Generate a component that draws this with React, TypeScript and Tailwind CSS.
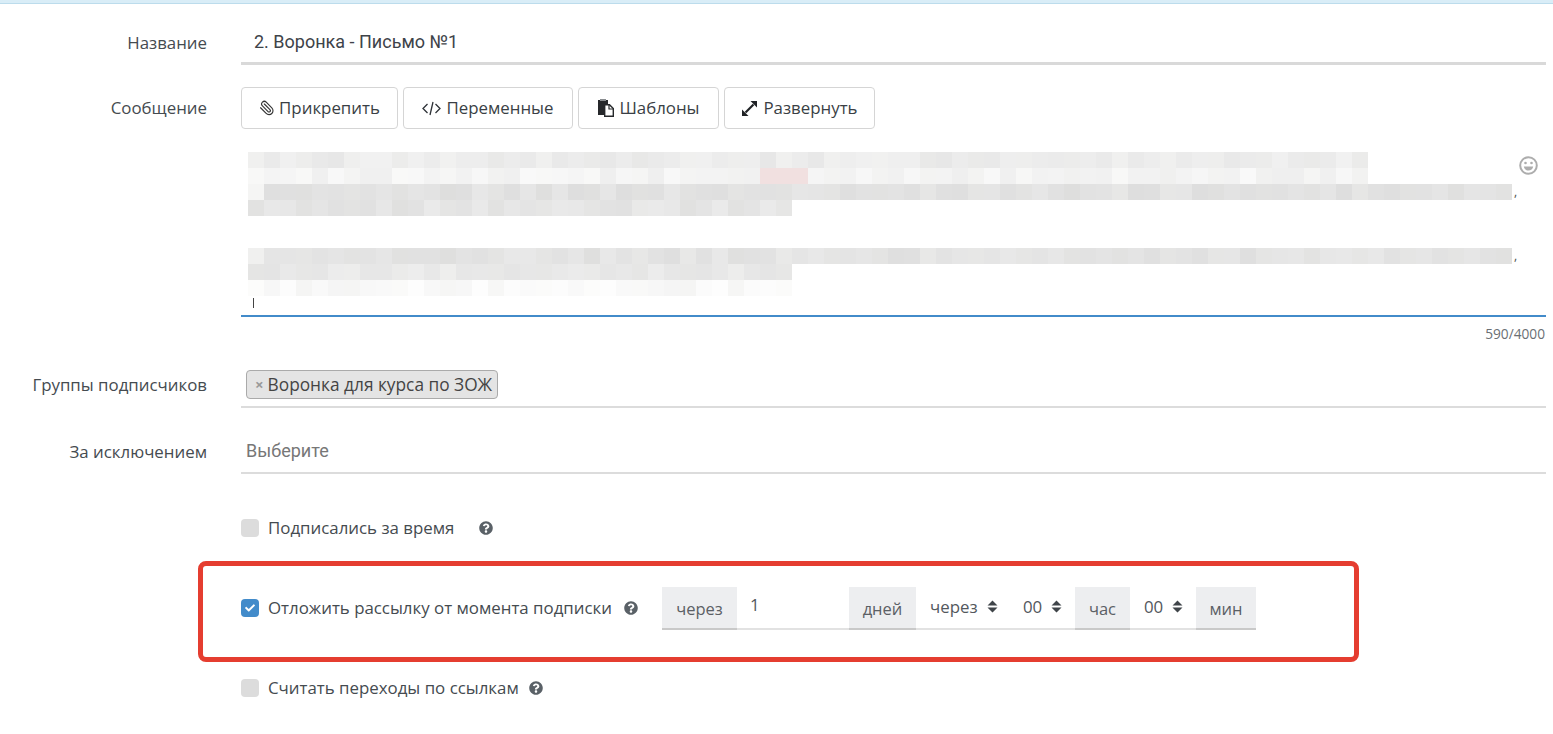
import React from "react";
import { Paperclip } from "lucide-react";
import { FaQuestionCircle, FaCheck } from "react-icons/fa";

const OS = "font-['Open_Sans','Noto_Sans',sans-serif]";
const RB = "font-['Roboto','Liberation_Sans',sans-serif]";

function noise(seed: number, i: number) {
  const x = Math.sin(seed * 97.13 + i * 12.9898) * 43758.5453;
  return x - Math.floor(x);
}

function BlurRow({ seed, cells, base, first, pinkAt }: { seed: number; cells: number; base: number; first?: number; pinkAt?: number[] }) {
  return (
    <div className="flex h-4">
      {Array.from({ length: cells }).map((_, i) => {
        const v = i === 0 && first ? first : Math.min(253, Math.round(base + (noise(seed, i) - 0.5) * 10));
        const pink = pinkAt && pinkAt.includes(i);
        return (
          <div
            key={i}
            className="w-4 h-4 shrink-0"
            style={{ backgroundColor: pink ? "#f1e0e0" : `rgb(${v},${v},${v - (i % 3 === 0 ? 1 : 0)})` }}
          />
        );
      })}
    </div>
  );
}

function Label({ children, className = "" }: { children: React.ReactNode; className?: string }) {
  return <div className={`w-[207px] shrink-0 text-right text-[16.85px] text-[#454b50] ${OS} ${className}`}>{children}</div>;
}

function Btn({ icon, text, w }: { icon: React.ReactNode; text: string; w: string }) {
  return (
    <div className={`${w} h-[42px] flex items-center justify-center gap-[4px] border border-[#d5d5d5] rounded-[4px] bg-white text-[16.85px] text-[#3a3f45] ${OS}`}>
      {icon}
      <span>{text}</span>
    </div>
  );
}

function Check({ on }: { on?: boolean }) {
  return (
    <div className={`w-[18px] h-[18px] rounded-[4px] shrink-0 flex items-center justify-center ${on ? "bg-[#428bca]" : "bg-[#dcdcdc]"}`}>
      {on && <FaCheck className="text-white text-[10px]" />}
    </div>
  );
}

function Addon({ children, w }: { children: React.ReactNode; w: string }) {
  return (
    <div className={`${w} h-[43px] bg-[#edeef0] border-b-2 border-[#c9c9c9] flex items-center justify-center pt-[3px] text-[16.5px] text-[#5b6065] ${OS}`}>
      {children}
    </div>
  );
}

function SortIcon() {
  return (
    <svg width="11" height="13" viewBox="0 0 11 13" className="shrink-0">
      <path d="M5.5 0.5 L10.5 5.5 H0.5 Z M0.5 7.5 H10.5 L5.5 12.5 Z" fill="#3f4449" />
    </svg>
  );
}

function Sel({ children, w, pl }: { children: React.ReactNode; w: string; pl: string }) {
  return (
    <div className={`${w} ${pl} h-[43px] border-b-2 border-[#e2e2e2] flex items-center gap-[9px] pb-[2px] text-[16.85px] text-[#53585d] ${OS}`}>
      <span>{children}</span>
      <SortIcon />
    </div>
  );
}

function Help({ className = "" }: { className?: string }) {
  return <FaQuestionCircle className={`text-[#5a6167] text-[14px] shrink-0 ${className}`} />;
}

function CodeIcon() {
  return (
    <svg width="19" height="15" viewBox="0 0 19 15" fill="none" stroke="#2f3338" strokeWidth="1.3" className="shrink-0 mr-[1px]">
      <path d="M5.5 3 L1 7.5 L5.5 12" />
      <path d="M13.5 3 L18 7.5 L13.5 12" />
      <path d="M11 1 L8 14" />
    </svg>
  );
}

function TemplatesIcon() {
  return (
    <svg width="18" height="18" viewBox="0 0 18 18" className="shrink-0">
      <path d="M1 1 H11 V5 H7 V16 H1 Z" fill="#26282b" />
      <rect x="3" y="0" width="6" height="2" fill="#8a8d90" />
      <path d="M7.7 5.7 H12.5 L16.3 9.5 V17.3 H7.7 Z" fill="#fff" stroke="#26282b" strokeWidth="1.4" />
      <path d="M12 6 V10 H16" fill="none" stroke="#26282b" strokeWidth="1.2" />
    </svg>
  );
}

function ExpandIcon() {
  return (
    <svg width="17" height="17" viewBox="0 0 17 17" className="shrink-0 mr-[1px]">
      <path d="M4.5 12.5 L12.5 4.5" stroke="#1f2225" strokeWidth="2.2" />
      <path d="M9.5 1 H16 V7.5 Z" fill="#1f2225" />
      <path d="M1 9.5 V16 H7.5 Z" fill="#1f2225" />
    </svg>
  );
}

function SmileIcon() {
  return (
    <svg width="19" height="19" viewBox="0 0 19 19" className="absolute right-[8px] top-[4px]">
      <circle cx="9.5" cy="9.5" r="8.3" fill="none" stroke="#adadad" strokeWidth="2" />
      <circle cx="6.5" cy="7" r="1.3" fill="#adadad" />
      <circle cx="12.5" cy="7" r="1.3" fill="#adadad" />
      <path d="M4.8 10.6 H14.2 C13.8 13.2 11.8 14.6 9.5 14.6 C7.2 14.6 5.2 13.2 4.8 10.6 Z" fill="#adadad" />
    </svg>
  );
}

export default function App() {
  return (
    <div className="w-[1553px] h-[734px] bg-white overflow-hidden">
      <div className="h-1 bg-[#d9edf7] border-b border-[#bcdcec]" />

      <div className="flex mt-[18px]">
        <Label className="pt-[8px]">Название</Label>
        <div className={`ml-[34px] w-[1305px] h-[43px] border-b-[3px] border-[#d9d9d9] pl-[13px] pt-[6px] text-[18px] text-[#3e4349] ${RB}`}>
          2. Воронка - Письмо №1
        </div>
      </div>

      <div className="flex mt-[22px]">
        <Label className="pt-[8px]">Сообщение</Label>
        <div className="ml-[34px] w-[1305px]">
          <div className="flex gap-[5px]">
            <Btn w="w-[157px]" text="Прикрепить" icon={<Paperclip size={16} strokeWidth={1.7} className="text-[#333] -scale-x-100" />} />
            <Btn w="w-[170px]" text="Переменные" icon={<CodeIcon />} />
            <Btn w="w-[141px]" text="Шаблоны" icon={<TemplatesIcon />} />
            <Btn w="w-[151px]" text="Развернуть" icon={<ExpandIcon />} />
          </div>

          <div className="relative mt-[23px] h-[165px] border-b-2 border-[#428bca] pl-[7px]">
            <BlurRow seed={1} cells={70} base={236} />
            <BlurRow seed={2} cells={70} base={244} pinkAt={[32, 33, 34]} />
            <div className="flex items-end">
              <BlurRow seed={3} cells={79} base={226} first={245} />
              <span className="text-[#555] text-[12px] leading-none ml-[2px] pb-[2px]">,</span>
            </div>
            <BlurRow seed={4} cells={34} base={229} />
            <div className="h-4" />
            <div className="h-4" />
            <div className="flex items-end">
              <BlurRow seed={5} cells={79} base={228} first={240} />
              <span className="text-[#555] text-[12px] leading-none ml-[2px] pb-[2px]">,</span>
            </div>
            <BlurRow seed={6} cells={34} base={233} />
            <BlurRow seed={7} cells={34} base={249} />
            <div className="w-px h-[10px] bg-[#444] ml-[5px] mt-[2px]" />
            <SmileIcon />
          </div>
          <div className={`text-right text-[13.7px] leading-[18px] text-[#6a6f74] mt-[8px] pr-[1px] ${OS}`}>590/4000</div>
        </div>
      </div>

      <div className="flex mt-[24px]">
        <Label className="pt-[5px]">Группы подписчиков</Label>
        <div className="ml-[34px] w-[1305px] h-[41px] border-b-2 border-[#dcdcdc] pl-[5px] pt-[3px]">
          <div className={`inline-flex items-center h-[29px] pl-[8px] pr-[5px] gap-[4px] bg-[#e4e4e4] border border-[#aaa] rounded-[4px] text-[17.3px] text-[#444] ${OS}`}>
            <span className="text-[#999] font-bold text-[15px]">×</span>
            <span>Воронка для курса по ЗОЖ</span>
          </div>
        </div>
      </div>

      <div className="flex mt-[21px]">
        <Label className="pt-[10px]">За исключением</Label>
        <div className={`ml-[34px] w-[1305px] h-[45px] border-b-2 border-[#dcdcdc] pl-[5px] pt-[8px] text-[18px] text-[#777] ${RB}`}>
          Выберите
        </div>
      </div>

      <div className={`flex items-center h-[26px] mt-[41px] ml-[241px] text-[16.85px] text-[#454b50] ${OS}`}>
        <Check />
        <span className="ml-[9px]">Подписались за время</span>
        <Help className="ml-[25px]" />
      </div>

      <div className="mt-[20px] ml-[198px] w-[1161px] h-[101px] border-[5px] border-[#e53d30] rounded-[8px] flex items-center pl-[38px] pb-[7px]">
        <Check on />
        <span className={`ml-[9px] text-[16.85px] text-[#454b50] ${OS}`}>Отложить рассылку от момента подписки</span>
        <Help className="ml-[12px]" />
        <div className="flex ml-[24px] mt-[1px]">
          <Addon w="w-[75px]">через</Addon>
          <div className={`w-[112px] h-[43px] border-b-2 border-[#e2e2e2] pl-[13px] pt-[5px] text-[16.85px] text-[#53585d] ${OS}`}>1</div>
          <Addon w="w-[67px]">дней</Addon>
          <Sel w="w-[92px]" pl="pl-[14px]">через</Sel>
          <Sel w="w-[67px]" pl="pl-[15px]">00</Sel>
          <Addon w="w-[55px]">час</Addon>
          <Sel w="w-[66px]" pl="pl-[14px]">00</Sel>
          <Addon w="w-[60px]">мин</Addon>
        </div>
      </div>

      <div className={`flex items-center h-[26px] mt-[13px] ml-[241px] text-[16.85px] text-[#454b50] ${OS}`}>
        <Check />
        <span className="ml-[9px]">Считать переходы по ссылкам</span>
        <Help className="ml-[10px]" />
      </div>
    </div>
  );
}
